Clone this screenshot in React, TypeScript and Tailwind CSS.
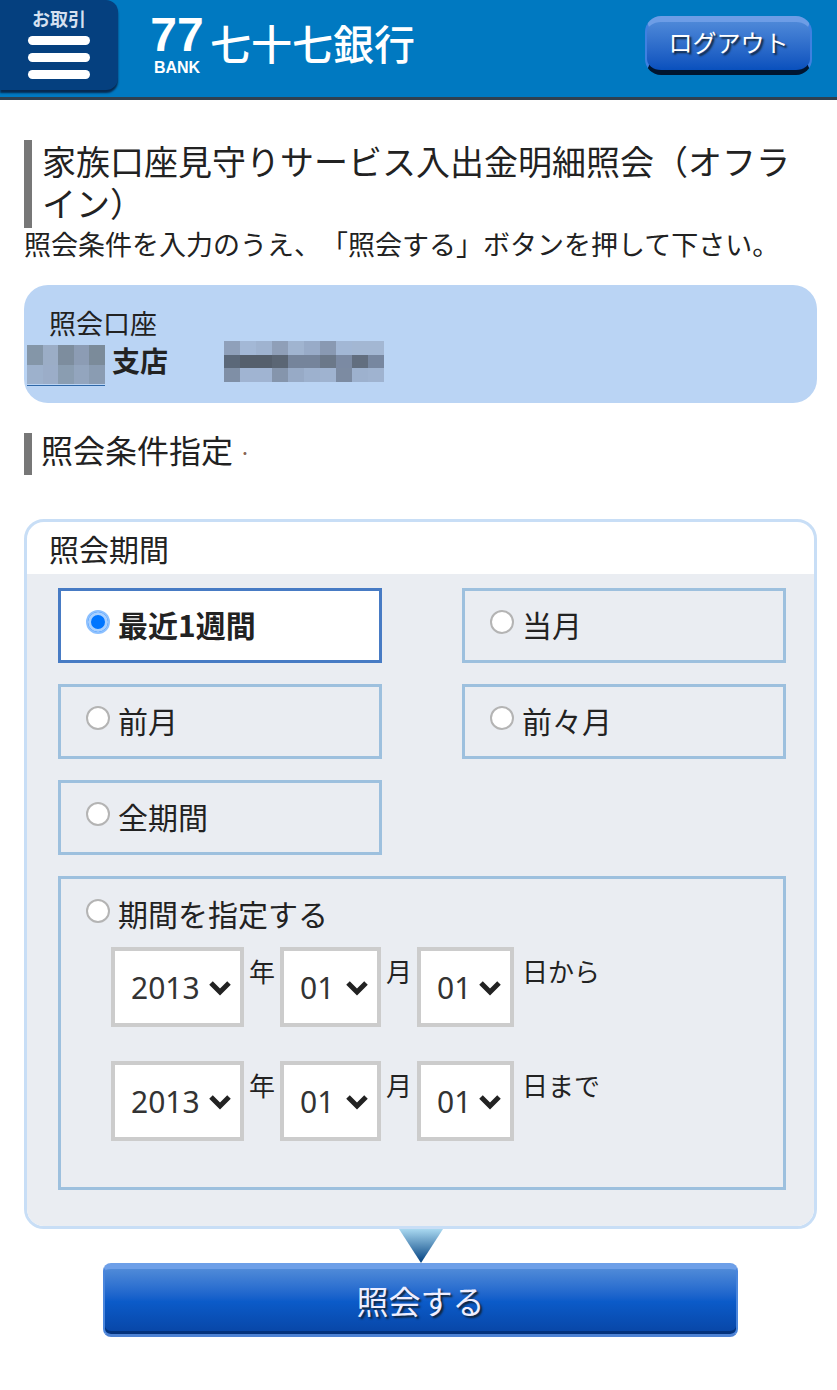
import { useState } from "react";

const periods = [
  { id: "week", label: "最近1週間" },
  { id: "this-month", label: "当月" },
  { id: "last-month", label: "前月" },
  { id: "two-months-ago", label: "前々月" },
  { id: "all", label: "全期間" },
];

const years = ["2013", "2012", "2011"];
const months = ["01", "02", "03", "04", "05", "06", "07", "08", "09", "10", "11", "12"];
const days = Array.from({ length: 31 }, (_, i) => String(i + 1).padStart(2, "0"));

const radioClass =
  "mb-1 size-6 shrink-0 appearance-none rounded-full border-2 border-[#b4b4b4] bg-white checked:border-[#8cc0ff] checked:bg-[#0075ff] checked:shadow-[inset_0_0_0_3px_#a9d0ff]";

/* Masked branch name and account number */
const branchMask = [
  ["#8496a8", "#9badc6", "#7d8d9e", "#8c9cb4", "#7b8b9a"],
  ["#9db1cc", "#9badc8", "#8a9db1", "#93a5be", "#8a9cb2"],
];

const accountMask = [
  ["#8fa0ba", "#a3b8d6", "#9fb3d0", "#8f9fb8", "#a0b4d0", "#98abc8", "#8999b2", "#a2b7d5", "#a3b7d3", "#a3b7d3"],
  ["#5b6879", "#555f6c", "#555f6c", "#5b6674", "#75849b", "#75849b", "#6b7889", "#7b8aa3", "#626e7f", "#7787a0"],
  ["#7f8fa6", "#a0b4d2", "#a0b4d2", "#8595ac", "#97aac6", "#9db1ce", "#9fb3d0", "#7c8ba2", "#9db1ce", "#9fb3d0"],
];

function Mask({ rows, className }: { rows: string[][]; className: string }) {
  return (
    <svg
      className={className}
      viewBox={`0 0 ${rows[0].length} ${rows.length}`}
      preserveAspectRatio="none"
      shapeRendering="crispEdges"
      aria-hidden="true"
    >
      {rows.map((row, y) =>
        row.map((fill, x) => <rect key={`${x}-${y}`} x={x} y={y} width="1" height="1" fill={fill} />)
      )}
    </svg>
  );
}

function DateSelect({
  label,
  options,
  className,
}: {
  label: string;
  options: string[];
  className: string;
}) {
  return (
    <div className={`relative ${className}`}>
      <select
        aria-label={label}
        className="h-20 w-full appearance-none border-4 border-[#cccccc] bg-white pl-4 font-['Noto_Sans',sans-serif] text-[30px] text-[#333]"
      >
        {options.map((o) => (
          <option key={o}>{o}</option>
        ))}
      </select>
      <svg
        className="pointer-events-none absolute top-8 right-3 h-[18px] w-6"
        viewBox="0 0 24 18"
        fill="none"
        stroke="#222"
        strokeWidth="5"
        aria-hidden="true"
      >
        <path d="M3 4l9 9 9-9" />
      </svg>
    </div>
  );
}

function DateRow({ name, suffix }: { name: string; suffix: string }) {
  return (
    <div className="flex items-start">
      <DateSelect label={`${name}年`} options={years} className="w-[133px]" />
      <span className="w-9 pt-2 text-center text-[26px] leading-8">年</span>
      <DateSelect label={`${name}月`} options={months} className="w-[101px]" />
      <span className="w-9 pt-2 text-center text-[26px] leading-8">月</span>
      <DateSelect label={`${name}日`} options={days} className="w-[97px]" />
      <span className="pt-2 pl-2 text-[26px] leading-8">{suffix}</span>
    </div>
  );
}

export default function App() {
  const [period, setPeriod] = useState("week");

  return (
    <div className="bg-white pb-[53px] font-['Noto_Sans_CJK_JP',sans-serif] text-[#222] [text-spacing-trim:space-all]">
      {/* HEADER */}
      <header className="flex h-[100px] items-start border-b-[3px] border-[#2f4050] bg-[#0079c1] pr-[25px]">
        <button
          type="button"
          className="flex h-[90px] w-[118px] flex-col items-center rounded-r-xl bg-[#05407f] pt-1 shadow-[0_3px_2px_#06294f]"
        >
          <span className="text-lg leading-7 font-bold text-[#d5e0f0]">お取引</span>
          <span className="mt-1 flex flex-col gap-2">
            <span className="h-[9px] w-[62px] rounded-full bg-white" />
            <span className="h-[9px] w-[62px] rounded-full bg-white" />
            <span className="h-[9px] w-[62px] rounded-full bg-white" />
          </span>
        </button>

        <a href="#top" className="ml-[34px] flex items-start text-white">
          <span className="flex w-[50px] flex-col items-center pt-3 font-['Liberation_Sans',sans-serif]">
            <span className="text-5xl leading-[46px] font-bold">77</span>
            <span className="text-base leading-5 font-bold">BANK</span>
          </span>
          <span className="ml-2 pt-3 text-[41px] leading-[60px] font-medium">七十七銀行</span>
        </a>

        <button
          type="button"
          className="mt-4 ml-auto h-[59px] w-[167px] rounded-2xl border-x-2 border-t-[6px] border-b-[5px] border-x-[#3f80e0] border-t-[#6d9de6] border-b-[#001530] bg-linear-to-b from-[#4d88d8] to-[#0850bd] pb-2 text-2xl leading-8 text-white [text-shadow:2px_2px_2px_#123]"
        >
          ログアウト
        </button>
      </header>

      <main className="pt-10 pr-5 pl-6">
        {/* TITLE */}
        <h1 className="border-l-8 border-[#777] pb-1 pl-[10px] text-[34px] leading-[42px]">
          家族口座見守りサービス入出金明細照会（オフライン）
        </h1>
        <p className="text-[27px] leading-8">照会条件を入力のうえ、「照会する」ボタンを押して下さい。</p>

        {/* ACCOUNT */}
        <section className="mt-[25px] h-[118px] rounded-3xl bg-[#bad4f4] pt-5">
          <h2 className="pl-[25px] text-[27px] leading-9">照会口座</h2>
          <div className="flex items-start">
            <div className="ml-[3px] mt-1 w-[78px] border-b border-[#2f68a8] pb-px">
              <Mask rows={branchMask} className="h-[39px] w-full" />
            </div>
            <span className="ml-[7px] pt-px text-[28px] leading-9 font-bold">支店</span>
            <Mask rows={accountMask} className="ml-14 h-[41px] w-40" />
          </div>
        </section>

        <h2 className="mt-[30px] border-l-8 border-[#777] pb-[10px] pl-[9px] text-[32px] leading-8">
          照会条件指定 <span className="align-[4px] text-base leading-4 font-bold text-[#865]">·</span>
        </h2>

        {/* CONDITIONS */}
        <form onSubmit={(e) => e.preventDefault()}>
          <section className="mt-11 overflow-hidden rounded-[20px] border-[3px] border-[#c8def6]">
            <h3 className="pl-[22px] text-3xl leading-[52px]">照会期間</h3>
            <div className="bg-[#eaedf2] pt-[14px] pr-7 pb-9 pl-[31px]">
              <div className="grid grid-cols-2 gap-x-20 gap-y-[21px]">
                {periods.map((p) => (
                  <label
                    key={p.id}
                    className={`flex h-[75px] items-center gap-2 border-[3px] pb-1 pl-[25px] text-3xl ${
                      period === p.id ? "border-[#477bc4] bg-white font-bold" : "border-[#9dc0de]"
                    }`}
                  >
                    <input
                      type="radio"
                      name="period"
                      className={radioClass}
                      checked={period === p.id}
                      onChange={() => setPeriod(p.id)}
                    />
                    {p.label}
                  </label>
                ))}
              </div>

              <div className="mt-[21px] border-[3px] border-[#9dc0de] pt-3 pb-[46px] pl-[25px]">
                <label className="flex items-center gap-2 text-3xl leading-[44px]">
                  <input
                    type="radio"
                    name="period"
                    className={radioClass}
                    checked={period === "custom"}
                    onChange={() => setPeriod("custom")}
                  />
                  期間を指定する
                </label>
                <div className="mt-3 flex flex-col gap-[34px] pl-[25px]">
                  <DateRow name="開始" suffix="日から" />
                  <DateRow name="終了" suffix="日まで" />
                </div>
              </div>
            </div>
          </section>

          {/* SUBMIT */}
          <svg className="mx-auto h-[34px] w-11" viewBox="0 0 44 34" aria-hidden="true">
            <defs>
              <linearGradient id="arrow" x1="0" y1="0" x2="0" y2="1">
                <stop offset="0" stopColor="#a9d8f0" />
                <stop offset="1" stopColor="#003f80" />
              </linearGradient>
            </defs>
            <path d="M0 0h44L22 34z" fill="url(#arrow)" />
          </svg>
          <button
            type="submit"
            className="mx-auto block h-[74px] w-4/5 rounded-lg border-x-2 border-t-[6px] border-b-[3px] border-x-[#4a86dd] border-t-[#6d9fe8] border-b-[#4d82d4] bg-linear-to-b from-[#4f8ad8] via-[#0b5bc9] to-[#0845a5] pb-1 text-[32px] leading-10 text-[#eef] shadow-[inset_0_-3px_0_#03327c] [text-shadow:2px_2px_2px_#123]"
          >
            照会する
          </button>
        </form>
      </main>
    </div>
  );
}
